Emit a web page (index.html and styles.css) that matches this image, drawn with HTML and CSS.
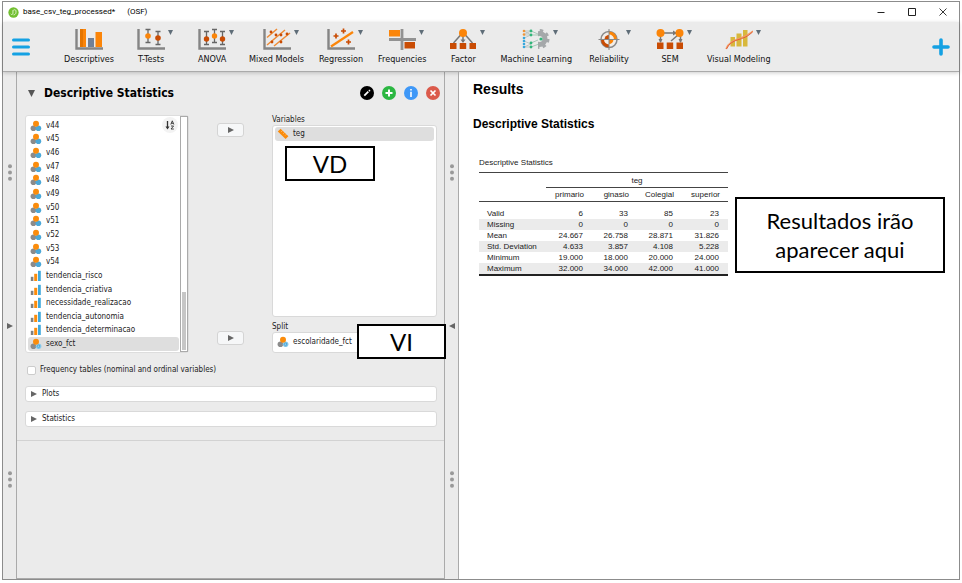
FILE: index.html
```html
<!DOCTYPE html>
<html lang="en">
<head>
<meta charset="utf-8">
<title>base_csv_teg_processed* (OSF)</title>
<link rel="stylesheet" href="styles.css">
</head>
<body>
<svg class="defs" aria-hidden="true">
  <symbol id="nominal" viewBox="0 0 12 12"><circle cx="3.4" cy="8.3" r="2.8" fill="#8b8b8b"/><circle cx="8.4" cy="8.3" r="2.8" fill="#4ba8d8"/><circle cx="6" cy="3.8" r="3" fill="#fb8c0b"/></symbol>
  <symbol id="nominal-text" viewBox="0 0 12 12"><circle cx="3.4" cy="8.3" r="2.8" fill="#8b8b8b"/><circle cx="8.6" cy="8.2" r="2.8" fill="#8fcdec"/><circle cx="6" cy="3.8" r="3" fill="#fb8c0b"/><path d="M9.6 7.3a1.4 1.4 0 1 0 0 2M9.7 6.8v2.4" fill="none" stroke="#3a9bd0" stroke-width=".7"/></symbol>
  <symbol id="ordinal" viewBox="0 0 12 12"><path d="M.8 6.8h2.6V11H.8z" fill="#808080"/><path d="M4.2 3.8h3V11h-3z" fill="#fb8c0b"/><path d="M8 .8h2.8V11H8z" fill="#3fa9dc"/></symbol>
  <symbol id="scale" viewBox="0 0 12 12"><path d="M.8 3.6 3.6.8l7.8 7.4L8.6 11z" fill="#fb8c0b"/><path d="m5.4 2.7-1 1M7.4 4.6l-1 1M9.3 6.4l-1 1" stroke="#fff" stroke-width=".5"/></symbol>
  <symbol id="right" viewBox="0 0 6 6"><path d="M0 0l6 3-6 3z" fill="currentColor"/></symbol>
  <symbol id="down" viewBox="0 0 6 6"><path d="M0 0h6L3 6z" fill="currentColor"/></symbol>
  <symbol id="dots" viewBox="0 0 4 17"><g fill="#999"><circle cx="2" cy="2.2" r="2"/><circle cx="2" cy="8.5" r="2"/><circle cx="2" cy="14.8" r="2"/></g></symbol>
  <symbol id="axes" viewBox="0 0 28 22"><path d="M1.5 1v19.5H28" fill="none" stroke="#858585" stroke-width="2.4"/></symbol>
</svg>

<div class="window">
  <header class="titlebar">
    <svg class="logo" viewBox="0 0 12 12"><circle cx="6" cy="6" r="5.6" fill="#72bf31"/><path d="M3 7.5c1 1.4 2.4.6 2.4-.8V4M5.4 4.2c0-1.4 3.3-1.8 3.3.2v1.4c0 2-1.7 2.800-2.700 2.800" fill="none" stroke="#e6f6d8" stroke-width="1"/></svg>
    <span class="filename">base_csv_teg_processed*</span><span>(OSF)</span>
    <div class="wincontrols">
      <button aria-label="Minimize"><svg viewBox="0 0 8 8"><path d="M.5 4.5h7" stroke="#222"/></svg></button>
      <button aria-label="Maximize"><svg viewBox="0 0 8 8"><path d="M.5.5h7v7h-7z" fill="none" stroke="#222"/></svg></button>
      <button aria-label="Close"><svg viewBox="0 0 8 8"><path d="m.5.5 7 7m0-7-7 7" stroke="#222" stroke-width=".9"/></svg></button>
    </div>
  </header>

  <nav class="toolbar">
    <button class="menu" aria-label="Menu"><svg viewBox="0 0 18 18"><path d="M1.5 2h15M1.5 9h15M1.5 16h15" stroke="#14a1e3" stroke-width="3" stroke-linecap="round"/></svg></button>
    <div class="modules">
      <button class="module"><svg class="icon" viewBox="0 0 28 22"><use href="#axes"/><path d="M5 1h6v18H5zM20.500 4H27v15h-6.500z" fill="#fb8509"/><path d="M5 1h3v18H5z" fill="#e57500"/><path d="M13 10h6v9h-6z" fill="#718096"/></svg>Descriptives</button>
      <button class="module"><svg class="icon" viewBox="0 0 28 22"><use href="#axes"/><path d="M8.500 1.500h5M11 1.500v13M8.500 14.500h5M18.500 3.500h5M21 3.500v13M18.500 16.500h5" stroke="#666" stroke-width="1.300"/><circle cx="11" cy="8" r="2.800" fill="#fb8509"/><circle cx="21" cy="10" r="2.800" fill="#c94c04"/></svg><svg class="drop"><use href="#down"/></svg>T-Tests</button>
      <button class="module"><svg class="icon" viewBox="0 0 28 22"><use href="#axes"/><path d="M6 3.500h5M8.500 3.500v13M6 16.500h5M14 1.500h5M16.500 1.500v13M14 14.500h5M22 3.500h5M24.500 3.500v13M22 16.500h5" stroke="#666" stroke-width="1.300"/><circle cx="8.500" cy="11" r="2.700" fill="#c94c04"/><circle cx="16.500" cy="8" r="2.700" fill="#fb8509"/><circle cx="24.500" cy="11" r="2.700" fill="#c94c04"/></svg><svg class="drop"><use href="#down"/></svg>ANOVA</button>
      <button class="module"><svg class="icon" viewBox="0 0 28 22"><use href="#axes"/><path d="M4 9.500 14 1M4 17 22 2M11 18 27 5" stroke="#ee8b35" stroke-width="1.500"/><g fill="#c94c04"><circle cx="8" cy="4" r="1.400"/><circle cx="13" cy="7" r="1.400"/><circle cx="9" cy="14" r="1.400"/><circle cx="18" cy="7" r="1.400"/><circle cx="18" cy="14" r="1.400"/><circle cx="24" cy="6" r="1.400"/></g></svg><svg class="drop"><use href="#down"/></svg>Mixed Models</button>
      <button class="module"><svg class="icon" viewBox="0 0 28 22"><use href="#axes"/><path d="M4 18.500 26 4" stroke="#fb8509" stroke-width="2.200"/><path d="M6.500 8h5M9 5.500v5M14 3h5M16.500.5v5M19 14h5M21.500 11.500v5" stroke="#c94c04" stroke-width="1.700"/></svg><svg class="drop"><use href="#down"/></svg>Regression</button>
      <button class="module"><svg class="icon" viewBox="0 0 28 22"><path d="M14 1v21M1 11.500h27" stroke="#929292" stroke-width="2.800"/><path d="M1 2h11v6.500H1z" fill="#fb8509"/><path d="M16.500 14H27v6.500H16.500z" fill="#c94c04"/></svg><svg class="drop"><use href="#down"/></svg>Frequencies</button>
      <button class="module"><svg class="icon" viewBox="0 0 28 22"><path d="m12.500 6-8 9M14 7v7M15.500 6l8 9" stroke="#777" stroke-width="1.500"/><path d="m11.500 11.500 2.500 3.500 2.500-3.500" fill="#777"/><circle cx="14" cy="5" r="4" fill="#fb8509"/><path d="M1 15h6.500v6H1zM10.700 15h6.500v6h-6.500zM20.500 15H27v6h-6.500z" fill="#c94c04"/></svg><svg class="drop"><use href="#down"/></svg>Factor</button>
      <button class="module"><svg class="icon" viewBox="0 0 28 22"><circle cx="17.500" cy="11" r="5.500" fill="none" stroke="#a5a8aa" stroke-width="5"/><circle cx="17.500" cy="11" r="8.500" fill="none" stroke="#a5a8aa" stroke-width="3" stroke-dasharray="3.340 3.340"/><path d="M0 0h16v22H0z" fill="#ebebeb"/><path d="M2 3h7M2 6.500 9 3m0 4L2 3m0 4h7M2 10l7-3M2 13l7 3m-7 3 7-3M2 19h7" stroke="#aeb8b4" stroke-width=".7" fill="none"/><path d="m9 3 7 3M9 7h9M9 15l7-3M9 19l8-3" stroke="#88b9a2" stroke-width=".7"/><g fill="#ef9438"><circle cx="2" cy="3" r="1.300"/><circle cx="2" cy="6.500" r="1.300"/></g><g fill="#37a8dc"><circle cx="2" cy="10" r="1.300"/><circle cx="2" cy="13" r="1.300"/><circle cx="2" cy="16" r="1.300"/><circle cx="2" cy="19" r="1.300"/></g><g fill="#32b67a"><circle cx="9" cy="3" r="1.400"/><circle cx="9" cy="7" r="1.400"/><circle cx="9" cy="15" r="1.400"/><circle cx="9" cy="19" r="1.400"/><circle cx="19" cy="11" r="1.600"/></g></svg><svg class="drop"><use href="#down"/></svg>Machine Learning</button>
      <button class="module"><svg class="icon" viewBox="0 0 28 22"><circle cx="14" cy="11.500" r="8" fill="#f3eee9" stroke="#8a8a8a" stroke-width="1.500"/><path d="M14 3.500a8 8 0 0 1 8 8h-3a5 5 0 0 0-5-5z" fill="#fb8509"/><path d="M14 19.500a8 8 0 0 1-8-8h3a5 5 0 0 0 5 5z" fill="#c94c04"/><path d="M14 11.500V7a4.500 4.500 0 0 0-4.500 4.500z" fill="#c94c04"/><path d="M14 11.500V16a4.500 4.500 0 0 0 4.500-4.500z" fill="#fb8509"/><path d="M14 1v21M3.500 11.500h21" stroke="#888"/></svg><svg class="drop"><use href="#down"/></svg>Reliability</button>
      <button class="module"><svg class="icon" viewBox="0 0 28 22"><path d="M8 5h12M4.500 8v6M24.500 8v6M22 7l-7 6" stroke="#777" stroke-width="1.500"/><path d="m17 2.500 4 2.500-4 2.500M2.500 11h4l-2 4M22.500 11h4l-2 4" fill="#777"/><circle cx="4.500" cy="5" r="4" fill="#fb8509"/><circle cx="23.500" cy="5" r="4" fill="#fb8509"/><path d="M1 14.500h6.500V21H1zM10.700 14.500h6.500V21h-6.500zM20.500 14.500H27V21h-6.500z" fill="#c94c04"/></svg><svg class="drop"><use href="#down"/></svg>SEM</button>
      <button class="module"><svg class="icon" viewBox="0 0 28 22"><path d="M5.500 9h4.500v9.500H5.500zM11.500 5.500H16.500v13h-5zM18 2h4.500v16.500H18z" fill="#d8b83c"/><path d="M1 21C5 10 18 12 28 3" fill="none" stroke="#f39a66" stroke-width="1.500"/><path d="M1.500 21C7 9 18 14 27.500 4" fill="none" stroke="#df5930" stroke-width=".9"/></svg><svg class="drop"><use href="#down"/></svg>Visual Modeling</button>
    </div>
    <button class="menu" aria-label="Add module"><svg viewBox="0 0 18 18"><path d="M9 2v14M2 9h14" stroke="#14a1e3" stroke-width="3.600" stroke-linecap="round"/></svg></button>
  </nav>

  <main class="workspace">
    <div class="gutter"><svg class="dots"><use href="#dots"/></svg><svg class="tri"><use href="#right"/></svg><svg class="dots"><use href="#dots"/></svg></div>

    <section class="analysis">
      <form class="form">
        <div class="formhead">
          <svg class="expand"><use href="#down"/></svg>
          <h1>Descriptive Statistics</h1>
          <button type="button" aria-label="Edit title"><svg viewBox="0 0 14 14"><circle cx="7" cy="7" r="7"/><path d="m4.300 9.700 4-4" stroke="#fff" stroke-width="1.800"/><path d="m9 5 .9-.9" stroke="#fff" stroke-width="1.800"/></svg></button>
          <button type="button" aria-label="Duplicate"><svg viewBox="0 0 14 14"><circle cx="7" cy="7" r="7" fill="#2cb742"/><path d="M7 3.500v7M3.500 7h7" stroke="#fff" stroke-width="2"/></svg></button>
          <button type="button" aria-label="Information"><svg viewBox="0 0 14 14"><circle cx="7" cy="7" r="7" fill="#3f98f7"/><path d="M7 3v1.600M7 5.700V11" stroke="#fff" stroke-width="1.600"/></svg></button>
          <button type="button" aria-label="Remove"><svg viewBox="0 0 14 14"><circle cx="7" cy="7" r="7" fill="#db5a4b"/><path d="m4.500 4.500 5 5m0-5-5 5" stroke="#fff" stroke-width="1.700"/></svg></button>
        </div>

        <div class="assign">
          <div class="available">
            <ul class="vars">
              <li><svg><use href="#nominal"/></svg>v44</li>
              <li><svg><use href="#nominal"/></svg>v45</li>
              <li><svg><use href="#nominal"/></svg>v46</li>
              <li><svg><use href="#nominal"/></svg>v47</li>
              <li><svg><use href="#nominal"/></svg>v48</li>
              <li><svg><use href="#nominal"/></svg>v49</li>
              <li><svg><use href="#nominal"/></svg>v50</li>
              <li><svg><use href="#nominal"/></svg>v51</li>
              <li><svg><use href="#nominal"/></svg>v52</li>
              <li><svg><use href="#nominal"/></svg>v53</li>
              <li><svg><use href="#nominal"/></svg>v54</li>
              <li><svg><use href="#ordinal"/></svg>tendencia_risco</li>
              <li><svg><use href="#ordinal"/></svg>tendencia_criativa</li>
              <li><svg><use href="#ordinal"/></svg>necessidade_realizacao</li>
              <li><svg><use href="#ordinal"/></svg>tendencia_autonomia</li>
              <li><svg><use href="#ordinal"/></svg>tendencia_determinacao</li>
              <li class="selected"><svg><use href="#nominal-text"/></svg>sexo_fct</li>
            </ul>
            <button type="button" class="sort" aria-label="Sort variables"><svg viewBox="0 0 10 10"><path d="M2.500 1v7" stroke="#333" stroke-width="1.300"/><path d="M.5 6.500h4l-2 3z" fill="#333"/><path d="m5.800 4.500 1.500-3.700 1.500 3.700M6.300 3.300h2M6 6h2.600L6 9h2.800" stroke="#333" stroke-width=".9" fill="none"/></svg></button>
            <div class="scrollbar"><div class="thumb"></div></div>
          </div>
          <div class="movers">
            <button type="button" class="mover" aria-label="Move to Variables"><svg class="tri"><use href="#right"/></svg></button>
            <button type="button" class="mover" aria-label="Move to Split"><svg class="tri"><use href="#right"/></svg></button>
          </div>
          <div class="targets">
            <h2>Variables</h2>
            <div class="box tall">
              <div class="item selected"><svg><use href="#scale"/></svg>teg</div>
              <div class="note note-vd">VD</div>
            </div>
            <h2>Split</h2>
            <div class="box short">
              <div class="item"><svg><use href="#nominal-text"/></svg>escolaridade_fct</div>
              <div class="note note-vi">VI</div>
            </div>
          </div>
        </div>

        <label class="check"><input type="checkbox">Frequency tables (nominal and ordinal variables)</label>
        <button type="button" class="section"><svg class="tri"><use href="#right"/></svg>Plots</button>
        <button type="button" class="section"><svg class="tri"><use href="#right"/></svg>Statistics</button>
      </form>
    </section>

    <div class="gutter"><svg class="dots"><use href="#dots"/></svg><svg class="tri flip"><use href="#right"/></svg><svg class="dots"><use href="#dots"/></svg></div>

    <section class="results">
      <h1>Results</h1>
      <h2>Descriptive Statistics</h2>
      <table>
        <caption>Descriptive Statistics</caption>
        <colgroup><col class="c-label"><col class="c-1"><col class="c-2"><col class="c-3"><col class="c-4"></colgroup>
        <thead>
          <tr class="over"><td></td><th colspan="4">teg</th></tr>
          <tr class="levels"><td></td><th>primario</th><th>ginasio</th><th>Colegial</th><th>superior</th></tr>
        </thead>
        <tbody>
          <tr class="first"><th>Valid</th><td>6</td><td>33</td><td>85</td><td>23</td></tr>
          <tr><th>Missing</th><td>0</td><td>0</td><td>0</td><td>0</td></tr>
          <tr><th>Mean</th><td>24.667</td><td>26.758</td><td>28.871</td><td>31.826</td></tr>
          <tr><th>Std. Deviation</th><td>4.633</td><td>3.857</td><td>4.108</td><td>5.228</td></tr>
          <tr><th>Minimum</th><td>19.000</td><td>18.000</td><td>20.000</td><td>24.000</td></tr>
          <tr><th>Maximum</th><td>32.000</td><td>34.000</td><td>42.000</td><td>41.000</td></tr>
        </tbody>
      </table>
      <div class="note note-results">Resultados irão aparecer aqui</div>
    </section>
  </main>
</div>
</body>
</html>
```
FILE: styles.css
```css
* { box-sizing: border-box; }
body {
  margin: 0;
  padding: 1px 2px 3px;
  height: 100vh;
  background: #fff;
  color: #222;
  font: 8px/12px "DejaVu Sans Condensed", "DejaVu Sans", sans-serif;
}
.defs { position: absolute; width: 0; height: 0; }
button { border: 0; padding: 0; background: none; font: inherit; color: inherit; }
h1, h2, ul { margin: 0; padding: 0; }
svg { display: block; flex: none; }

.window {
  height: 100%;
  min-height: 460px;
  display: flex;
  flex-direction: column;
  border: 1px solid #8c8c8c;
}

.titlebar {
  height: 20px;
  flex: none;
  display: flex;
  align-items: center;
  padding: 0 12px 0 5px;
  font: 8px/12px Roboto, sans-serif;
  color: #000;
}
.logo { width: 11px; height: 11px; margin-right: 4px; }
.filename { margin-right: 12px; }
.wincontrols { margin-left: auto; display: flex; gap: 23px; }
.wincontrols svg { width: 8px; height: 8px; }

.toolbar {
  position: relative;
  height: 50px;
  flex: none;
  display: flex;
  align-items: center;
  padding: 0 9px;
  background: #ebebeb;
  border-bottom: 1px solid #aaa;
  box-shadow: 0 1px 4px #0003;
}
.menu svg { width: 18px; height: 18px; }
.modules { flex: 1; display: flex; gap: 13px; margin-left: 34px; }
.module {
  position: relative;
  min-width: 48px;
  display: flex;
  flex-direction: column;
  align-items: center;
  gap: 2px;
  font-size: 9px;
  line-height: 14px;
  white-space: nowrap;
  color: #111;
}
.icon { width: 28px; height: 22px; }
.drop { position: absolute; top: 2px; left: calc(50% + 17px); width: 5px; height: 5px; color: #5f6d78; }

.workspace { flex: 1; display: flex; min-height: 0; }
.gutter {
  width: 13px;
  flex: none;
  display: flex;
  flex-direction: column;
  align-items: center;
  justify-content: center;
  gap: 142px;
  background: #ebebeb;
}
.dots { width: 4px; height: 17px; }
.tri { width: 6px; height: 6px; color: #666; }
.flip { transform: scaleX(-1); }

.analysis {
  width: 429px;
  flex: none;
  background: #ebebeb;
  border: solid #aaa;
  border-width: 0 1px 1px;
}
.form { padding: 14px 7px 13px 8px; border-bottom: 1px solid #d2d2d2; }
.formhead { display: flex; align-items: center; gap: 8px; height: 14px; }
.formhead h1 { flex: 1; color: #000; font-size: 12px; line-height: 14px; }
.formhead button svg { width: 14px; height: 14px; }
.formhead button:last-child { margin-right: -3px; }
.expand { width: 9px; height: 7px; margin-left: 2px; color: #555; }

.assign { display: flex; margin-top: 15px; height: 238px; }
.available {
  position: relative;
  width: 164px;
  display: flex;
  background: #fff;
  border: 1px solid #ddd;
  border-radius: 3px;
}
.vars { flex: 1; display: flex; flex-direction: column; padding: 3px 1px 1px 2px; list-style: none; }
.vars li, .item { display: flex; align-items: center; gap: 4px; padding-left: 2px; border-radius: 3px; }
.vars li { flex: 1; }
.vars svg, .item svg { width: 12px; height: 12px; }
.selected { background: #dedede; }
.sort {
  position: absolute;
  top: 1px;
  right: 10px;
  width: 16px;
  height: 16px;
  display: grid;
  place-items: center;
  border-radius: 50%;
  background: #f3f3f3;
}
.sort svg { width: 10px; height: 10px; }
.scrollbar { width: 8px; display: flex; align-items: flex-end; padding: 1px; border: 1px solid #aaa; }
.thumb { width: 100%; height: 25%; background: #c6c6c6; }

.movers { flex: 1; display: flex; flex-direction: column; align-items: center; justify-content: space-between; padding: 8px 0; }
.mover {
  width: 27px;
  height: 14px;
  display: grid;
  place-items: center;
  background: #f6f7f8;
  border: 1px solid #d4d4d4;
  border-radius: 3px;
}
.targets { width: 165px; display: flex; flex-direction: column; }
.targets h2 { font-size: 8px; font-weight: normal; line-height: 10px; }
.box {
  position: relative;
  padding: 1px 2px;
  background: #fff;
  border: 1px solid #d9d9d9;
  border-radius: 3px;
}
.tall { flex: 1; margin-bottom: 5px; }
.item { height: 14px; }
.short { height: 21px; padding-top: 2px; }

.check { display: flex; align-items: center; gap: 4px; margin: 11px 0 10px 2px; }
.check input {
  appearance: none;
  width: 9px;
  height: 9px;
  margin: 0;
  background: #fff;
  border: 1px solid #ccc;
  border-radius: 2px;
}
.section {
  width: 100%;
  height: 16px;
  display: flex;
  align-items: center;
  gap: 5px;
  padding: 0 5px;
  background: #fff;
  border: 1px solid #d9d9d9;
  border-radius: 3px;
}
.section + .section { margin-top: 9px; }

.results {
  position: relative;
  flex: 1;
  padding: 9px 14px;
  border-left: 1px solid #aaa;
  font: 8px/11px "Liberation Sans", sans-serif;
}
.results h1 { color: #000; font-size: 14px; line-height: 16px; }
.results h2 { color: #000; font-size: 12px; line-height: 14px; margin: 20px 0 26px; }
table { width: 249px; margin-left: 6px; table-layout: fixed; border-collapse: separate; border-spacing: 0; border-bottom: 2px solid #222; }
caption { text-align: left; height: 15px; }
td, th { padding: 0 9px 0 0; font-weight: normal; text-align: right; white-space: nowrap; }
.c-label { width: 67px; }
.c-1 { width: 46px; }
.c-2, .c-3 { width: 45px; }
.c-4 { width: 46px; }
thead td, thead th { height: 15px; border-top: 1px solid #444; }
thead th { padding-right: 8px; }
.over th { text-align: center; padding: 0; }
.levels td { border-top: 0; }
.levels td, .levels th { border-bottom: 1px solid #444; }
tbody th { text-align: left; padding: 0 0 0 8px; }
.first td, .first th { padding-top: 6px; }
tbody tr:nth-child(even) { background: #ebebeb; }

.note {
  position: absolute;
  display: grid;
  place-items: center;
  background: #fff;
  border: 2px solid #000;
  color: #000;
  text-align: center;
  font: 24px/29px Lato, sans-serif;
}
.note-vd { top: 20px; left: 12px; width: 90px; height: 35px; }
.note-vi { z-index: 1; top: -9px; right: -10px; width: 89px; height: 35px; }
.note-results { top: 125px; right: 14px; width: 210px; height: 76px; padding: 0 20px; font-size: 22px; }
```
